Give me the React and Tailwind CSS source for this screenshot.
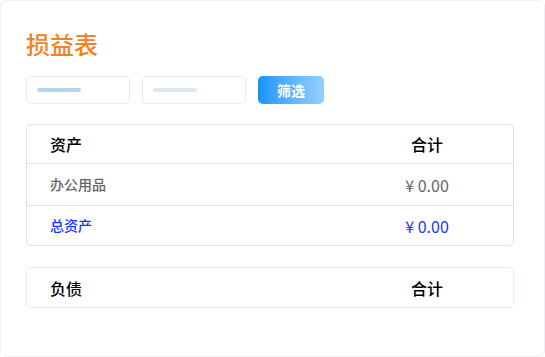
export default function App() {
  const font = { fontFamily: '"Noto Sans CJK SC", "Noto Sans", sans-serif' };

  return (
    <div className="w-[545px] h-[357px] bg-white" style={font}>
      <div className="w-[545px] h-[357px] border border-[#eef0f3] rounded-md pl-[25px] pr-[30px] pt-[27px]">
        <h1 className="text-[24px] leading-[32px] text-[#f5821f] font-medium">损益表</h1>

        <div className="flex items-center gap-[12px] mt-[16px]">
          <div className="w-[104px] h-[28px] border border-[#e2ecfa] rounded-[5px] flex items-center pl-[10px]">
            <div className="w-[44px] h-[4px] rounded-full bg-[#b9d4e8]" />
          </div>
          <div className="w-[104px] h-[28px] border border-[#e2ecfa] rounded-[5px] flex items-center pl-[10px]">
            <div className="w-[44px] h-[4px] rounded-full bg-[#dde9f3]" />
          </div>
          <button className="w-[66px] h-[28px] rounded-[5px] bg-gradient-to-r from-[#0d94fb] to-[#93cfff] text-white text-[14px] font-bold">
            筛选
          </button>
        </div>

        <div className="mt-[20px] border border-[#d6e4f7] rounded-[5px]">
          <div className="flex items-center h-[39px] border-b border-[#d6e4f7] text-[16px] text-black font-medium">
            <div className="flex-1 pl-[23px]">资产</div>
            <div className="w-[140px] mr-[16px] text-center">合计</div>
          </div>
          <div className="flex items-center h-[42px] border-b border-[#d6e4f7] text-[14px] text-[#666] font-medium">
            <div className="flex-1 pl-[23px]">办公用品</div>
            <div className="w-[140px] mr-[16px] text-center text-[16px] font-normal">¥ 0.00</div>
          </div>
          <div className="flex items-center h-[39px] text-[14px] text-[#1537ff] font-medium">
            <div className="flex-1 pl-[23px]">总资产</div>
            <div className="w-[140px] mr-[16px] text-center text-[16px] font-normal">¥ 0.00</div>
          </div>
        </div>

        <div className="mt-[21px] border border-[#e5effb] rounded-[5px]">
          <div className="flex items-center h-[39px] text-[16px] text-black font-medium">
            <div className="flex-1 pl-[23px]">负债</div>
            <div className="w-[140px] mr-[16px] text-center">合计</div>
          </div>
        </div>
      </div>
    </div>
  );
}
